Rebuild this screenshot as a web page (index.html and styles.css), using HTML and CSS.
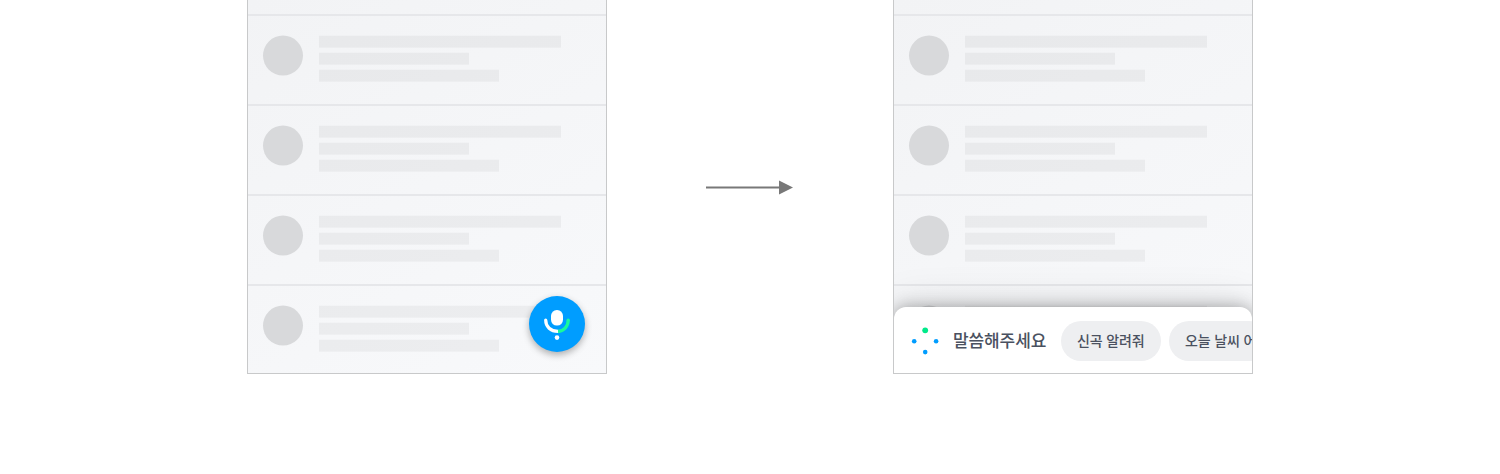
FILE: index.html
```html
<!DOCTYPE html>
<html lang="ko">
<head>
<meta charset="utf-8">
<title>음성 인식</title>
<link rel="stylesheet" href="styles.css">
</head>
<body>
<main class="stage">
  <section class="phone">
    <div class="list">
      <div class="row"><div class="avatar"></div><div class="lines"><i class="l1"></i><i class="l2"></i><i class="l3"></i></div></div>
      <div class="row"><div class="avatar"></div><div class="lines"><i class="l1"></i><i class="l2"></i><i class="l3"></i></div></div>
      <div class="row"><div class="avatar"></div><div class="lines"><i class="l1"></i><i class="l2"></i><i class="l3"></i></div></div>
      <div class="row"><div class="avatar"></div><div class="lines"><i class="l1"></i><i class="l2"></i><i class="l3"></i></div></div>
    </div>
    <div class="mic">
      <svg width="56" height="56" viewBox="0 0 56 56">
        <rect x="22" y="14" width="12" height="15.6" rx="5.8" fill="#fff"/>
        <path d="M16.7 24.1C16.7 30.8 21.6 35.4 29 35.4" fill="none" stroke="#fff" stroke-width="3.2" stroke-linecap="round"/>
        <path d="M29 35.4C34.6 35.2 39.2 30.8 39.2 24.1" fill="none" stroke="#19fa9b" stroke-width="3.2"/>
        <circle cx="39.2" cy="24.1" r="1.6" fill="#19fa9b"/>
        <circle cx="28" cy="41.6" r="2.3" fill="#fff"/>
      </svg>
    </div>
  </section>
  <svg class="arrow" width="87" height="14" viewBox="0 0 87 14"><path d="M0 7.5H74" stroke="#787878" stroke-width="2"/><path d="M73 .5L87 7.5L73 14.5Z" fill="#787878"/></svg>
  <section class="phone">
    <div class="list">
      <div class="row"><div class="avatar"></div><div class="lines"><i class="l1"></i><i class="l2"></i><i class="l3"></i></div></div>
      <div class="row"><div class="avatar"></div><div class="lines"><i class="l1"></i><i class="l2"></i><i class="l3"></i></div></div>
      <div class="row"><div class="avatar"></div><div class="lines"><i class="l1"></i><i class="l2"></i><i class="l3"></i></div></div>
      <div class="row"><div class="avatar"></div><div class="lines"><i class="l1"></i><i class="l2"></i><i class="l3"></i></div></div>
    </div>
    <div class="sheet">
      <svg class="dots" width="28" height="28" viewBox="0 0 28 28">
        <circle cx="14.2" cy="3.3" r="2.9" fill="#00e98a"/>
        <circle cx="3.2" cy="14.2" r="2.3" fill="#009dff"/>
        <circle cx="25.1" cy="14.2" r="2.3" fill="#009dff"/>
        <circle cx="14.2" cy="25.1" r="2.3" fill="#009dff"/>
      </svg>
      <span class="prompt">말씀해주세요</span>
      <span class="chip">신곡 알려줘</span>
      <span class="chip">오늘 날씨 어때</span>
    </div>
  </section>
</main>
</body>
</html>
```
FILE: styles.css
```css
* { box-sizing: border-box; }
body {
  margin: 0;
  background: #fff;
  font-family: "Noto Sans CJK KR", "Noto Sans", sans-serif;
  font-weight: 500;
  color: #4a5160;
}
.stage {
  display: flex;
  justify-content: center;
  height: 474px;
}
.phone {
  position: relative;
  width: 360px;
  height: 374px;
  border: 1px solid #c8c9ca;
  border-top: 0;
  overflow: hidden;
  background: linear-gradient(150deg, #f2f3f5, #f8f9fb);
}
.list { padding-top: 14px; }
.row {
  display: flex;
  gap: 16px;
  height: 90px;
  padding: 20px 15px 0 15.3px;
  border-top: 2px solid #e6e7ea;
}
.avatar {
  width: 40px;
  height: 40px;
  border-radius: 50%;
  background: #d8d9db;
  transform: translateY(-.4px);
}
.lines {
  display: flex;
  flex-direction: column;
  gap: 5px;
  transform: translateY(-.35px);
}
.lines i {
  height: 12px;
  background: rgba(0, 0, 0, .043);
}
.lines .l1 { width: 242px; }
.lines .l2 { width: 150px; }
.lines .l3 { width: 180px; }
.arrow {
  margin: 180px 100px 0 99px;
  overflow: visible;
}
.mic {
  position: absolute;
  right: 21px;
  bottom: 21px;
  width: 56px;
  height: 56px;
  border-radius: 50%;
  background: #009dff;
  box-shadow: 0 3px 7px rgba(0, 0, 0, .3);
}
.mic svg { display: block; }
.sheet {
  position: absolute;
  left: 0;
  bottom: 0;
  display: flex;
  align-items: center;
  width: 358px;
  height: 66px;
  padding: 2px 0 0 17px;
  border-radius: 12px 12px 0 0;
  background: #fff;
  box-shadow: 0 0 16px rgba(0, 0, 0, .3), 0 0 44px rgba(0, 0, 0, .14);
  white-space: nowrap;
  overflow: hidden;
}
.dots { flex: none; }
.prompt {
  flex: none;
  width: 94px;
  margin: 0 14px;
  padding-bottom: 2px;
  font-size: 17px;
  line-height: 24px;
  letter-spacing: -.1px;
}
.chip {
  flex: none;
  height: 40px;
  width: 100px;
  margin-right: 8px;
  padding: 0 16px;
  border-radius: 20px;
  background: #eeeff1;
  font-size: 14px;
  line-height: 38px;
  letter-spacing: -.15px;
}
```
